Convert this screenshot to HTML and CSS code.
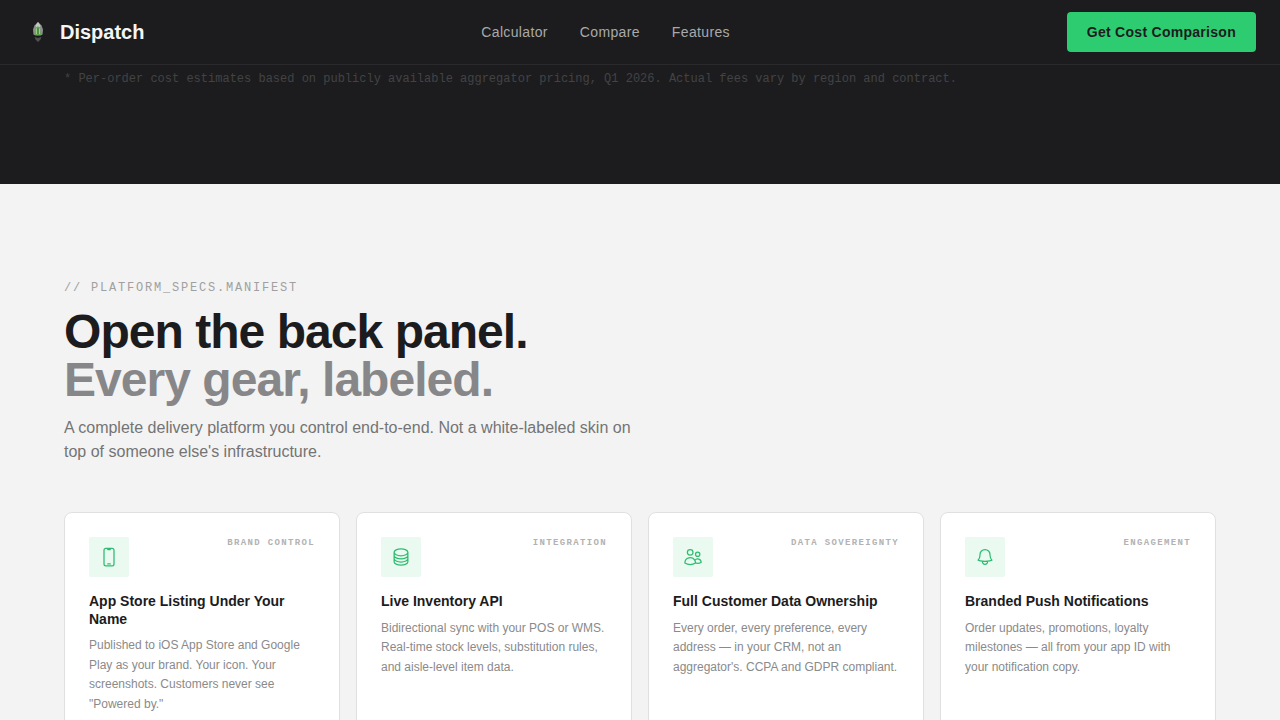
FILE: index.html
```html
<!DOCTYPE html>
<html lang="en">
<head>
    <meta charset="UTF-8">
    <meta name="viewport" content="width=device-width, initial-scale=1.0">
    <title>Dispatch</title>
    <link rel="stylesheet" href="styles.css">
</head>
<body>
    <header class="navbar">
        <a class="brand" href="#">
            <svg class="brand-logo" viewBox="0 0 28 28" aria-hidden="true">
                <path fill="#8d918e" d="M14 4l3.500 3.500 1.500 4-.5 5-2 1h-5l-2-1-.5-5 1.500-4z"/>
                <path fill="#c3c7c4" d="M14 4l2.500 3.500-.5 1.500h-4l-.5-1.500z"/>
                <path fill="#62a84f" d="M14 8l2 2.500.5 4 1 2.500h-7l1-2.500.5-4z"/>
                <path fill="#a9dc93" d="M12.200 10.500h.8v5.500h-.8zM15 10.500h.8v5.500H15z"/>
                <path fill="#3c6634" d="M13.600 10h.8v6h-.8z"/>
                <path fill="#505153" d="M10.500 19l3.500 1 3.500-1-1 2.500L14 24l-2.500-2.500z"/>
            </svg>
            <span>Dispatch</span>
        </a>
        <nav class="nav-links">
            <a href="#calculator">Calculator</a>
            <a href="#compare">Compare</a>
            <a href="#features">Features</a>
        </nav>
        <button class="cta-btn" type="button">Get Cost Comparison</button>
    </header>

    <section class="compare" id="compare">
        <p class="footnote">* Per-order cost estimates based on publicly available aggregator pricing, Q1 2026. Actual fees vary by region and contract.</p>
    </section>

    <section class="features" id="features">
        <p class="eyebrow">// PLATFORM_SPECS.MANIFEST</p>
        <h2>Open the back panel.<br><span class="muted">Every gear, labeled.</span></h2>
        <p class="intro">A complete delivery platform you control end-to-end. Not a white-labeled skin on top of someone else's infrastructure.</p>

        <div class="card-grid">
            <article class="card">
                <div class="card-top">
                    <div class="card-icon">
                        <svg viewBox="0 0 24 24" aria-hidden="true"><path d="M10.5 1.500H8.250A2.250 2.250 0 0 0 6 3.750v16.500a2.250 2.250 0 0 0 2.250 2.250h7.500A2.250 2.250 0 0 0 18 20.250V3.750a2.250 2.250 0 0 0-2.250-2.250H13.500m-3 0V3h3V1.500m-3 0h3m-3 18.750h3"/></svg>
                    </div>
                    <span class="tag">BRAND CONTROL</span>
                </div>
                <h3>App Store Listing Under Your Name</h3>
                <p>Published to iOS App Store and Google Play as your brand. Your icon. Your screenshots. Customers never see "Powered by."</p>
            </article>
            <article class="card">
                <div class="card-top">
                    <div class="card-icon">
                        <svg viewBox="0 0 24 24" aria-hidden="true"><path d="M20.250 6.375c0 2.278-3.694 4.125-8.250 4.125S3.750 8.653 3.750 6.375m16.500 0c0-2.278-3.694-4.125-8.250-4.125S3.750 4.097 3.750 6.375m16.500 0v11.250c0 2.278-3.694 4.125-8.250 4.125s-8.250-1.847-8.250-4.125V6.375m16.500 0v3.750m-16.500-3.750v3.750m16.500 0v3.750C20.250 16.153 16.556 18 12 18s-8.250-1.847-8.250-4.125v-3.750m16.500 0c0 2.278-3.694 4.125-8.250 4.125s-8.250-1.847-8.250-4.125"/></svg>
                    </div>
                    <span class="tag">INTEGRATION</span>
                </div>
                <h3>Live Inventory API</h3>
                <p>Bidirectional sync with your POS or WMS. Real-time stock levels, substitution rules, and aisle-level item data.</p>
            </article>
            <article class="card">
                <div class="card-top">
                    <div class="card-icon">
                        <svg viewBox="0 0 24 24" aria-hidden="true"><path d="M15 19.128a9.380 9.380 0 0 0 2.625.372 9.337 9.337 0 0 0 4.121-.952 4.125 4.125 0 0 0-7.533-2.493M15 19.128v-.003c0-1.113-.285-2.160-.786-3.070M15 19.128v.106A12.318 12.318 0 0 1 8.624 21c-2.331 0-4.512-.645-6.374-1.766l-.001-.109a6.375 6.375 0 0 1 11.964-3.070M12 6.375a3.375 3.375 0 1 1-6.750 0 3.375 3.375 0 0 1 6.750 0zm8.250 2.250a2.625 2.625 0 1 1-5.250 0 2.625 2.625 0 0 1 5.250 0z"/></svg>
                    </div>
                    <span class="tag">DATA SOVEREIGNTY</span>
                </div>
                <h3>Full Customer Data Ownership</h3>
                <p>Every order, every preference, every address — in your CRM, not an aggregator's. CCPA and GDPR compliant.</p>
            </article>
            <article class="card">
                <div class="card-top">
                    <div class="card-icon">
                        <svg viewBox="0 0 24 24" aria-hidden="true"><path d="M14.857 17.082a23.848 23.848 0 0 0 5.454-1.310A8.967 8.967 0 0 1 18 9.750V9A6 6 0 0 0 6 9v.750a8.967 8.967 0 0 1-2.312 6.022c1.733.640 3.560 1.085 5.455 1.310m5.714 0a24.255 24.255 0 0 1-5.714 0m5.714 0a3 3 0 1 1-5.714 0"/></svg>
                    </div>
                    <span class="tag">ENGAGEMENT</span>
                </div>
                <h3>Branded Push Notifications</h3>
                <p>Order updates, promotions, loyalty milestones — all from your app ID with your notification copy.</p>
            </article>
        </div>
    </section>
</body>
</html>
```
FILE: styles.css
```css
* {
    box-sizing: border-box;
}
body {
    margin: 0;
    font-family: "Liberation Sans", Arial, sans-serif;
    background-color: #f3f3f3;
    color: #1c1c1e;
}
h2, h3, p {
    margin: 0;
}
.navbar {
    position: sticky;
    top: 0;
    display: flex;
    align-items: center;
    justify-content: space-between;
    padding: 12px 24px;
    background-color: #1c1c1e;
    border-bottom: 1px solid #2a2a2c;
}
.brand {
    display: flex;
    align-items: center;
    gap: 8px;
    color: #f5f5f5;
    font-size: 20px;
    font-weight: 700;
    text-decoration: none;
}
.brand-logo {
    width: 28px;
    height: 28px;
}
.nav-links {
    display: flex;
    gap: 32px;
}
.nav-links a {
    color: #a9a9aa;
    font-size: 14px;
    letter-spacing: 0.025em;
    text-decoration: none;
}
.nav-links a:hover {
    color: #fff;
}
.cta-btn {
    height: 40px;
    padding: 0 20px;
    border: none;
    border-radius: 4px;
    background-color: #2ecc71;
    color: #1c1c1e;
    font-family: inherit;
    font-size: 14px;
    font-weight: 700;
    letter-spacing: 0.02em;
    cursor: pointer;
}
.compare {
    padding: 5px 64px 96px;
    background-color: #1c1c1e;
}
.footnote {
    color: #434345;
    font-family: "Liberation Mono", monospace;
    font-size: 12px;
    line-height: 18px;
}
.features {
    padding: 96px 64px;
}
.eyebrow {
    margin-bottom: 12px;
    color: #a0a0a0;
    font-family: "Liberation Mono", monospace;
    font-size: 12px;
    line-height: 16px;
    letter-spacing: 0.15em;
}
h2 {
    margin-bottom: 12px;
    font-size: 48px;
    line-height: 48px;
    letter-spacing: -0.02em;
}
.muted {
    color: #878789;
}
.intro {
    max-width: 576px;
    margin-bottom: 48px;
    color: #747475;
    font-size: 16px;
    line-height: 24px;
}
.card-grid {
    display: grid;
    grid-template-columns: repeat(4, 1fr);
    gap: 16px;
}
.card {
    padding: 24px;
    border: 1px solid #e0e0e0;
    border-radius: 8px;
    background-color: #fff;
}
.card-top {
    display: flex;
    align-items: flex-start;
    justify-content: space-between;
    margin-bottom: 16px;
}
.card-icon {
    display: flex;
    align-items: center;
    justify-content: center;
    width: 40px;
    height: 40px;
    border-radius: 2px;
    background-color: #eafaf1;
}
.card-icon svg {
    width: 20px;
    height: 20px;
    fill: none;
    stroke: #2ebd70;
    stroke-width: 1.5;
    stroke-linecap: round;
    stroke-linejoin: round;
}
.tag {
    color: #b2b2b3;
    font-family: "Liberation Mono", monospace;
    font-size: 9px;
    font-weight: 700;
    line-height: 12px;
    letter-spacing: 0.15em;
}
.card h3 {
    margin-bottom: 8px;
    font-size: 14px;
    line-height: 1.25;
}
.card p {
    color: #8a8a8b;
    font-size: 12px;
    line-height: 1.625;
}
```
